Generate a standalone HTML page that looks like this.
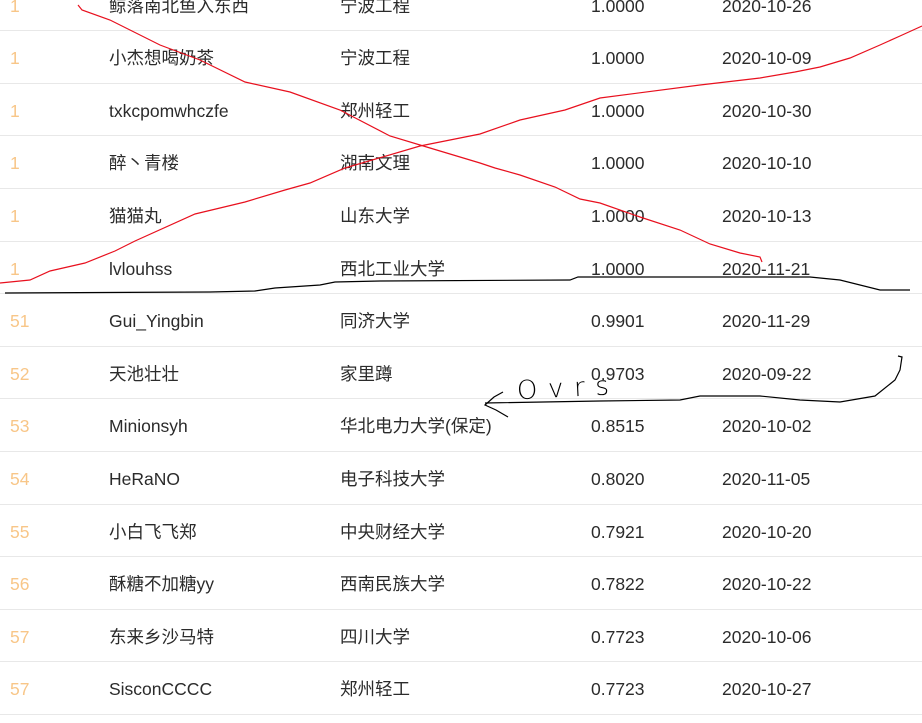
<!DOCTYPE html>
<html><head><meta charset="utf-8"><style>
html,body{margin:0;padding:0;background:#fff;width:922px;height:723px;overflow:hidden;position:relative;font-family:"Liberation Sans","Noto Sans CJK SC",sans-serif;}
.r{position:absolute;left:0;width:922px;height:52.6px;border-bottom:1.5px solid #e8e8e8;box-sizing:border-box;font-size:17.5px;color:#2b2b2b;}
.r span{position:absolute;top:1px;height:52px;line-height:52px;white-space:nowrap;}
.a{left:10px;color:#f8c688;}
.b{left:109px}.c{left:340px}.d{left:591px}.e{left:722px}
svg{position:absolute;left:0;top:0}
</style></head><body>
<div class="r" style="top:-21.4px"><span class="a">1</span><span class="b">鲸落南北鱼入东西</span><span class="c">宁波工程</span><span class="d">1.0000</span><span class="e">2020-10-26</span></div>
<div class="r" style="top:31.2px"><span class="a">1</span><span class="b">小杰想喝奶茶</span><span class="c">宁波工程</span><span class="d">1.0000</span><span class="e">2020-10-09</span></div>
<div class="r" style="top:83.8px"><span class="a">1</span><span class="b">txkcpomwhczfe</span><span class="c">郑州轻工</span><span class="d">1.0000</span><span class="e">2020-10-30</span></div>
<div class="r" style="top:136.4px"><span class="a">1</span><span class="b">醉丶青楼</span><span class="c">湖南文理</span><span class="d">1.0000</span><span class="e">2020-10-10</span></div>
<div class="r" style="top:189px"><span class="a">1</span><span class="b">猫猫丸</span><span class="c">山东大学</span><span class="d">1.0000</span><span class="e">2020-10-13</span></div>
<div class="r" style="top:241.6px"><span class="a">1</span><span class="b">lvlouhss</span><span class="c">西北工业大学</span><span class="d">1.0000</span><span class="e">2020-11-21</span></div>
<div class="r" style="top:294.2px"><span class="a">51</span><span class="b">Gui_Yingbin</span><span class="c">同济大学</span><span class="d">0.9901</span><span class="e">2020-11-29</span></div>
<div class="r" style="top:346.8px"><span class="a">52</span><span class="b">天池壮壮</span><span class="c">家里蹲</span><span class="d">0.9703</span><span class="e">2020-09-22</span></div>
<div class="r" style="top:399.4px"><span class="a">53</span><span class="b">Minionsyh</span><span class="c">华北电力大学(保定)</span><span class="d">0.8515</span><span class="e">2020-10-02</span></div>
<div class="r" style="top:452px"><span class="a">54</span><span class="b">HeRaNO</span><span class="c">电子科技大学</span><span class="d">0.8020</span><span class="e">2020-11-05</span></div>
<div class="r" style="top:504.6px"><span class="a">55</span><span class="b">小白飞飞郑</span><span class="c">中央财经大学</span><span class="d">0.7921</span><span class="e">2020-10-20</span></div>
<div class="r" style="top:557.2px"><span class="a">56</span><span class="b">酥糖不加糖yy</span><span class="c">西南民族大学</span><span class="d">0.7822</span><span class="e">2020-10-22</span></div>
<div class="r" style="top:609.8px"><span class="a">57</span><span class="b">东来乡沙马特</span><span class="c">四川大学</span><span class="d">0.7723</span><span class="e">2020-10-06</span></div>
<div class="r" style="top:662.4px"><span class="a">57</span><span class="b">SisconCCCC</span><span class="c">郑州轻工</span><span class="d">0.7723</span><span class="e">2020-10-27</span></div>
<svg width="922" height="723" viewBox="0 0 922 723" fill="none">
<polyline stroke="#e8101e" stroke-width="1.2" points="78,5 82,10 110,20 160,45 200,60 245,82 290,92 340,110 390,136 430,148 480,163 495,168 520,175 555,187 580,199 600,203 640,217 680,230 710,244 740,253 760,257 762,262"/>
<polyline stroke="#e8101e" stroke-width="1.2" points="0,283 30,280 50,271 85,263 115,251 135,241 195,214 245,202 285,190 310,183 345,168 420,146 480,134 520,120 565,110 600,98 700,85 760,78 795,72 820,67 850,58 880,45 900,36 922,26"/>
<polyline stroke="#000" stroke-width="1.2" points="5,293 210,292 255,291 275,288 320,285 335,282 380,281 570,280 578,277 810,277 840,280 880,290 910,290"/>
<polyline stroke="#000" stroke-width="1.2" points="485,403 600,401 680,400 700,396 760,396 800,400 840,402 875,396 895,380 900,370 902,357 898,356"/>
<polyline stroke="#000" stroke-width="1.2" points="503,392 494,397 485,405 496,410 508,417"/>
<text x="517" y="397" font-family="DejaVu Sans" font-size="26" font-weight="200" fill="#000" letter-spacing="3" transform="rotate(-3 560 390)" textLength="95">Ovrs</text>
</svg>
</body></html>
